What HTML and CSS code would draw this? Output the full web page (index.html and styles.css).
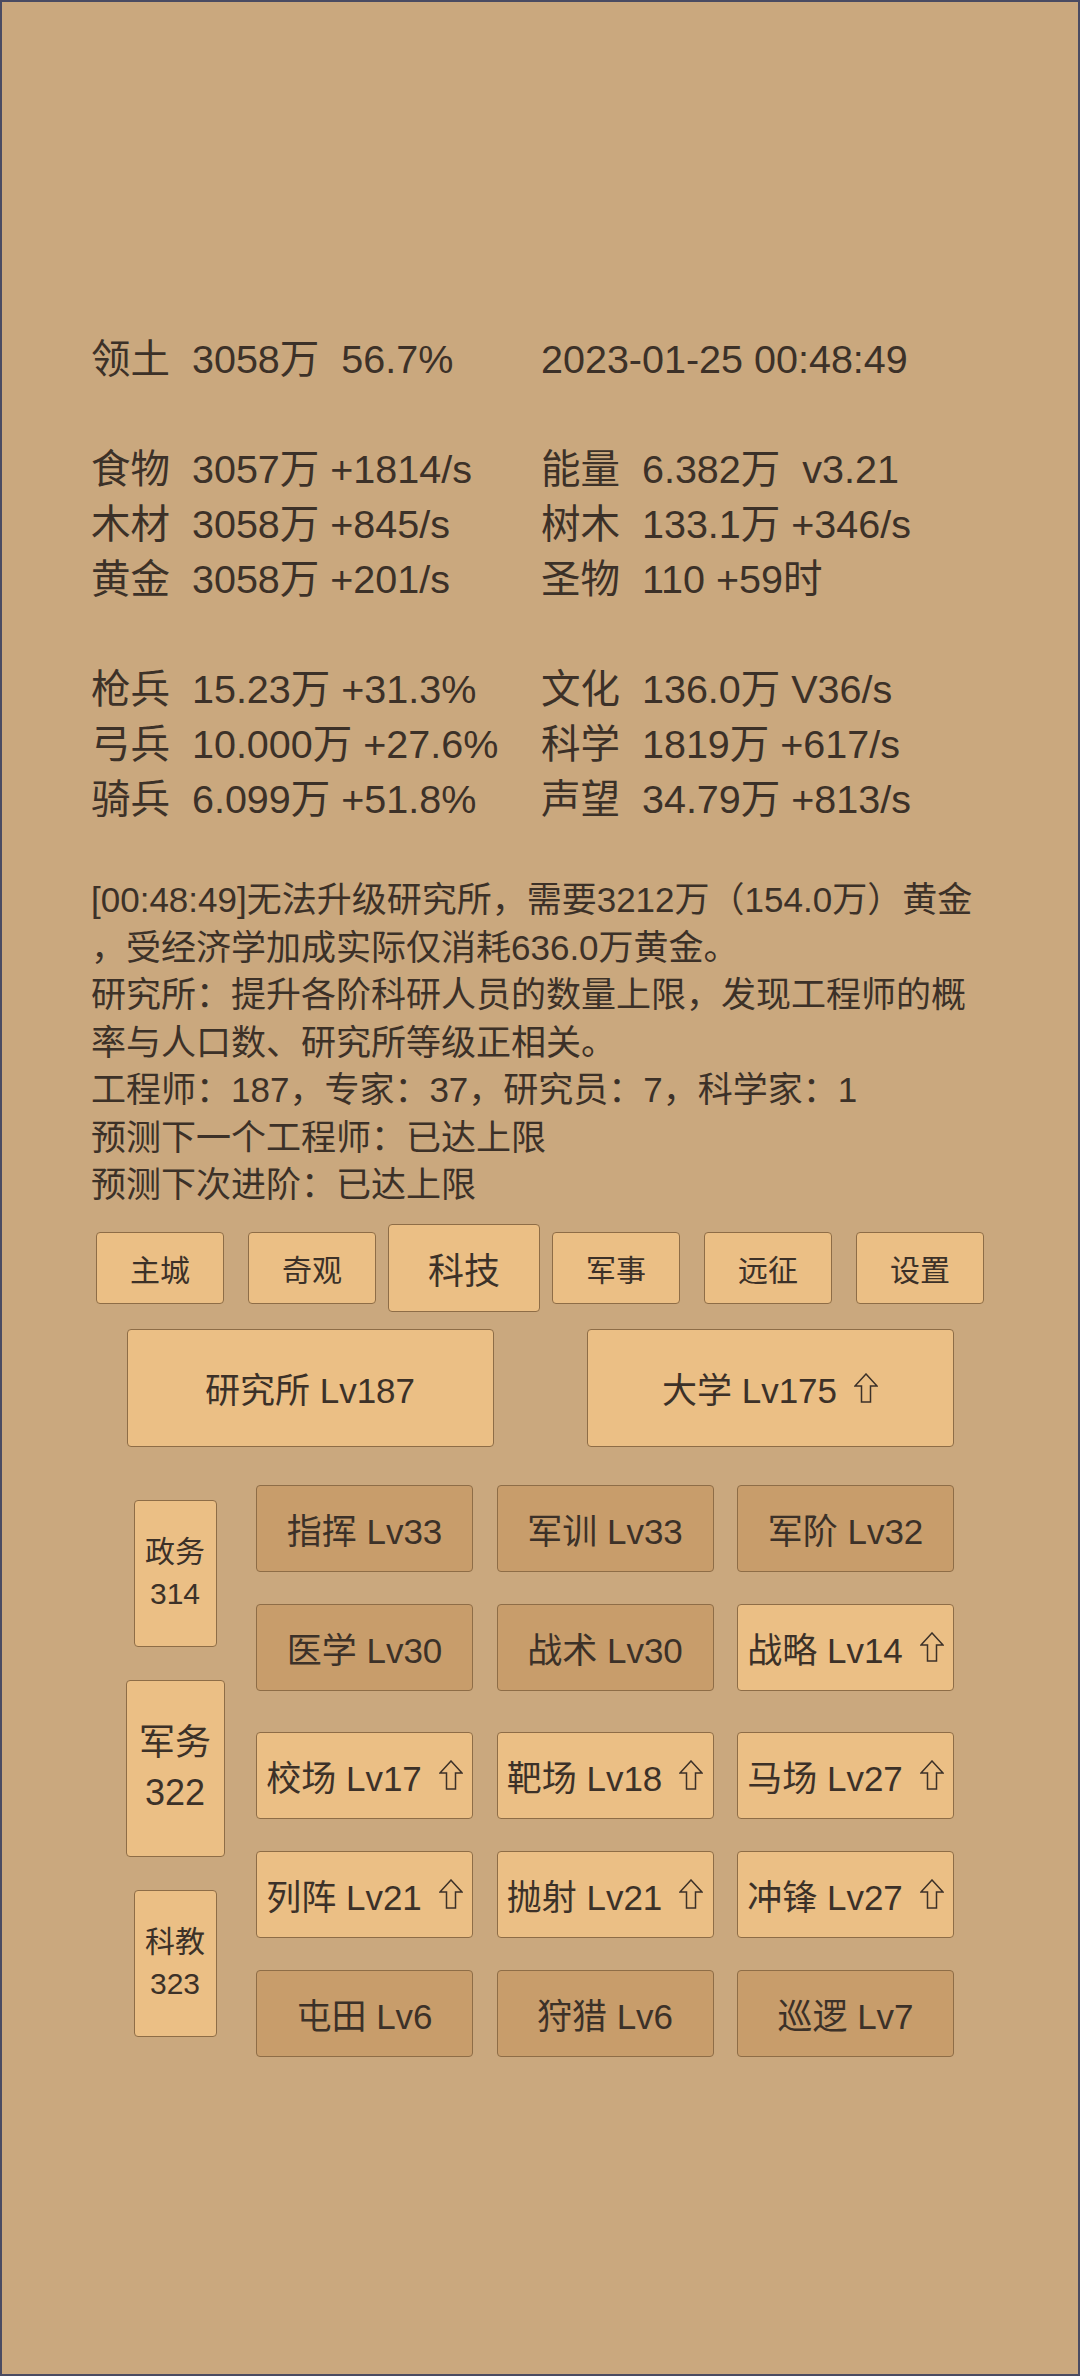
FILE: index.html
```html
<!DOCTYPE html>
<html lang="zh-CN">
<head>
<meta charset="utf-8">
<title>科技</title>
<link rel="stylesheet" href="styles.css">
</head>
<body>
<div class="screen">
  <div class="stats">
    <div class="cell">领土  3058万  56.7%</div><div class="cell">2023-01-25 00:48:49</div>
    <div class="blank"></div>
    <div class="cell">食物  3057万 +1814/s</div><div class="cell">能量  6.382万  v3.21</div>
    <div class="cell">木材  3058万 +845/s</div><div class="cell">树木  133.1万 +346/s</div>
    <div class="cell">黄金  3058万 +201/s</div><div class="cell">圣物  110 +59时</div>
    <div class="blank"></div>
    <div class="cell">枪兵  15.23万 +31.3%</div><div class="cell">文化  136.0万 V36/s</div>
    <div class="cell">弓兵  10.000万 +27.6%</div><div class="cell">科学  1819万 +617/s</div>
    <div class="cell">骑兵  6.099万 +51.8%</div><div class="cell">声望  34.79万 +813/s</div>
  </div>

  <div class="log">
    <p>[00:48:49]无法升级研究所，需要3212万（154.0万）黄金，受经济学加成实际仅消耗636.0万黄金。</p>
    <p>研究所：提升各阶科研人员的数量上限，发现工程师的概率与人口数、研究所等级正相关。</p>
    <p>工程师：187，专家：37，研究员：7，科学家：1</p>
    <p>预测下一个工程师：已达上限</p>
    <p>预测下次进阶：已达上限</p>
  </div>

  <nav class="tabs">
    <div class="slot"><div class="btn tab">主城</div></div>
    <div class="slot"><div class="btn tab">奇观</div></div>
    <div class="slot"><div class="btn tab active">科技</div></div>
    <div class="slot"><div class="btn tab">军事</div></div>
    <div class="slot"><div class="btn tab">远征</div></div>
    <div class="slot"><div class="btn tab">设置</div></div>
  </nav>

  <div class="buildings">
    <div class="btn building">研究所 Lv187</div>
    <div class="btn building">大学 Lv175<svg class="up" viewBox="0 0 24 30"><polygon points="12,1 23,13 16.5,13 16.5,29 7.5,29 7.5,13 1,13"/></svg></div>
  </div>

  <div class="tech">
    <div class="side">
      <div class="sslot"><div class="btn cat">政务<br>314</div></div>
      <div class="sslot"><div class="btn cat active">军务<br>322</div></div>
      <div class="sslot"><div class="btn cat">科教<br>323</div></div>
    </div>
    <div class="grid">
      <div class="btn item done">指挥 Lv33</div>
      <div class="btn item done">军训 Lv33</div>
      <div class="btn item done">军阶 Lv32</div>
      <div class="btn item done">医学 Lv30</div>
      <div class="btn item done">战术 Lv30</div>
      <div class="btn item">战略 Lv14<svg class="up" viewBox="0 0 24 30"><polygon points="12,1 23,13 16.5,13 16.5,29 7.5,29 7.5,13 1,13"/></svg></div>
      <div class="btn item tier">校场 Lv17<svg class="up" viewBox="0 0 24 30"><polygon points="12,1 23,13 16.5,13 16.5,29 7.5,29 7.5,13 1,13"/></svg></div>
      <div class="btn item tier">靶场 Lv18<svg class="up" viewBox="0 0 24 30"><polygon points="12,1 23,13 16.5,13 16.5,29 7.5,29 7.5,13 1,13"/></svg></div>
      <div class="btn item tier">马场 Lv27<svg class="up" viewBox="0 0 24 30"><polygon points="12,1 23,13 16.5,13 16.5,29 7.5,29 7.5,13 1,13"/></svg></div>
      <div class="btn item">列阵 Lv21<svg class="up" viewBox="0 0 24 30"><polygon points="12,1 23,13 16.5,13 16.5,29 7.5,29 7.5,13 1,13"/></svg></div>
      <div class="btn item">抛射 Lv21<svg class="up" viewBox="0 0 24 30"><polygon points="12,1 23,13 16.5,13 16.5,29 7.5,29 7.5,13 1,13"/></svg></div>
      <div class="btn item">冲锋 Lv27<svg class="up" viewBox="0 0 24 30"><polygon points="12,1 23,13 16.5,13 16.5,29 7.5,29 7.5,13 1,13"/></svg></div>
      <div class="btn item done">屯田 Lv6</div>
      <div class="btn item done">狩猎 Lv6</div>
      <div class="btn item done">巡逻 Lv7</div>
    </div>
  </div>
</div>
</body>
</html>
```

FILE: styles.css
```css
html, body {
  margin: 0;
  padding: 0;
}

body {
  background: #caa87e;
  color: #3c3128;
  font-family: "Liberation Sans", "Noto Sans CJK SC", sans-serif;
}

.screen {
  box-sizing: border-box;
  width: 1080px;
  height: 2376px;
  border: 2px solid #4a4b62;
  padding-top: 329.5px;
  overflow: hidden;
}

.stats {
  display: grid;
  grid-template-columns: 450px auto;
  padding-left: 89px;
  font-size: 39.5px;
  line-height: 55px;
}

.stats .cell {
  white-space: pre;
}

.stats .blank {
  grid-column: 1 / span 2;
  height: 55px;
}

.log {
  margin-top: 49.5px;
  padding: 0 89px;
  font-size: 35px;
  line-height: 47.5px;
  line-break: anywhere;
}

.log p {
  margin: 0;
}

.btn {
  box-sizing: border-box;
  display: flex;
  align-items: center;
  justify-content: center;
  background: #ebbf85;
  border: 1.5px solid #8e6d47;
  border-radius: 4px;
  text-align: center;
}

.tabs {
  margin-top: 15.5px;
  display: flex;
  justify-content: center;
  height: 88px;
}

.slot {
  width: 152px;
  display: flex;
  align-items: center;
  justify-content: center;
}

.tab {
  width: 128px;
  height: 72px;
  font-size: 30px;
}

.tab.active {
  width: 152px;
  height: 88px;
  font-size: 36px;
}

.buildings {
  margin-top: 17px;
  display: flex;
  justify-content: center;
  gap: 93px;
}

.building {
  width: 367px;
  height: 117.5px;
  font-size: 35px;
}

.up {
  width: 24px;
  height: 30px;
  margin-left: 17px;
  flex: none;
}

.up polygon {
  fill: none;
  stroke: #3c3128;
  stroke-width: 1.5;
  stroke-linejoin: miter;
}

.tech {
  margin-top: 29px;
  display: flex;
  padding-left: 123px;
}

.side {
  width: 100px;
  display: flex;
  flex-direction: column;
}

.sslot {
  height: 195px;
  display: flex;
  align-items: center;
  justify-content: center;
}

.cat {
  width: 83px;
  height: 147px;
  font-size: 30px;
  line-height: 1.4;
}

.cat.active {
  width: 99px;
  height: 177px;
  font-size: 36px;
}

.grid {
  margin-left: 31px;
  padding-top: 9px;
  display: grid;
  grid-template-columns: repeat(3, 217px);
  column-gap: 23.5px;
  row-gap: 32px;
  align-content: start;
}

.item {
  height: 87px;
  font-size: 35px;
}

.item.done {
  background: #c89d6b;
}

.item.tier {
  margin-top: 9px;
}
```
